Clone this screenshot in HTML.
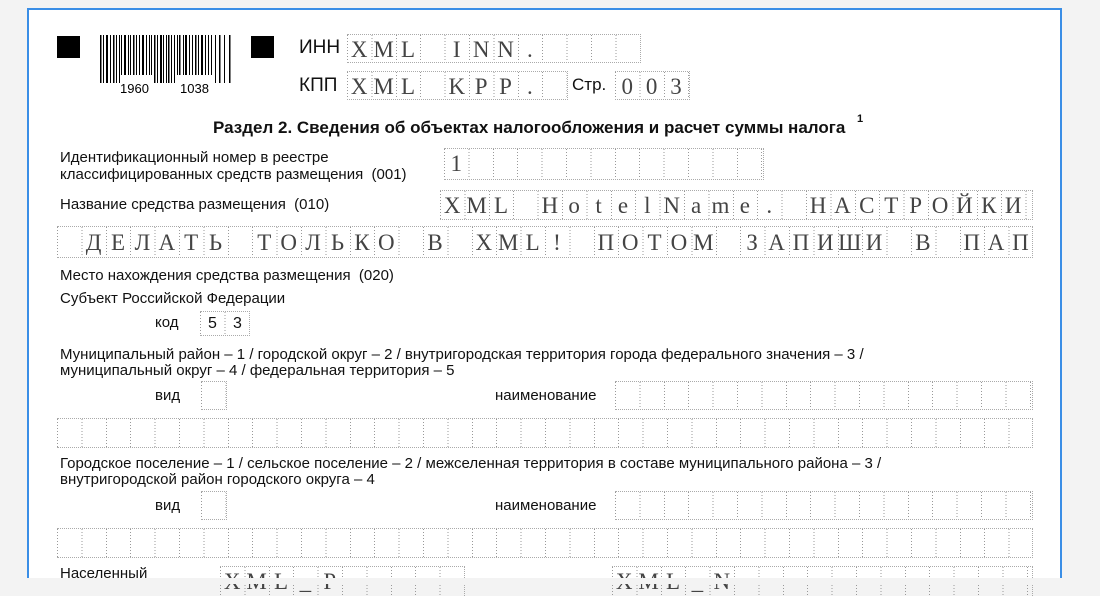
<!DOCTYPE html>
<html><head><meta charset="utf-8"><style>
html,body{margin:0;padding:0}
body{width:1100px;height:584px;background:#f3f3f3;position:relative;overflow:hidden;font-family:"Liberation Sans",Arial,sans-serif;color:#111}
#pg{position:absolute;left:27px;top:8px;width:1031px;height:570px;background:#fff;border:2px solid #3a8ee6;border-bottom:none}
.a{position:absolute;white-space:nowrap}
.t{font-size:15px}
.g{position:absolute;box-sizing:border-box;border-top:1px dotted #aaa;border-bottom:1px dotted #aaa;border-right:1px dotted #aaa;font-family:"Liberation Serif",serif;font-size:23px;white-space:nowrap;overflow:hidden;color:#444}
.g::before{content:"";position:absolute;left:0;top:0;right:0;bottom:0;background:repeating-linear-gradient(to right,#999 0 1px,transparent 1px 24.4px);-webkit-mask-image:repeating-linear-gradient(to bottom,#000 0 1px,transparent 1px 3px);mask-image:repeating-linear-gradient(to bottom,#000 0 1px,transparent 1px 3px)}
.g span{display:inline-block;width:24.4px;text-align:center;position:relative}
.sq{position:absolute;background:#000;width:23px;height:22px;top:36px}
</style></head><body>
<div id="pg"></div>
<div class="sq" style="left:57px"></div>
<div class="sq" style="left:251px"></div>
<svg class="a" style="left:100px;top:35px" width="132" height="60" viewBox="0 0 132 60">
<g fill="#000">
<rect x="0" y="0" width="1.5" height="48"/><rect x="3" y="0" width="1" height="48"/><rect x="6" y="0" width="2" height="48"/><rect x="10" y="0" width="1" height="48"/><rect x="13" y="0" width="1.5" height="48"/><rect x="16" y="0" width="1" height="48"/><rect x="19" y="0" width="1" height="48"/>
<rect x="21" y="0" width="1" height="40"/><rect x="24" y="0" width="2" height="40"/><rect x="28" y="0" width="1" height="40"/><rect x="30" y="0" width="1" height="40"/><rect x="33" y="0" width="1.5" height="40"/><rect x="36" y="0" width="1" height="40"/><rect x="39" y="0" width="1" height="40"/><rect x="42" y="0" width="2" height="40"/><rect x="46" y="0" width="1" height="40"/><rect x="49" y="0" width="1" height="40"/><rect x="51" y="0" width="1" height="40"/>
<rect x="54" y="0" width="1.5" height="48"/><rect x="57" y="0" width="1" height="48"/><rect x="60" y="0" width="2" height="48"/><rect x="63" y="0" width="1" height="48"/><rect x="66" y="0" width="1" height="48"/><rect x="68" y="0" width="1.5" height="48"/><rect x="71" y="0" width="1" height="48"/><rect x="74" y="0" width="1" height="48"/>
<rect x="77" y="0" width="1" height="40"/><rect x="79" y="0" width="1.5" height="40"/><rect x="83" y="0" width="1" height="40"/><rect x="85" y="0" width="2" height="40"/><rect x="89" y="0" width="1" height="40"/><rect x="92" y="0" width="1" height="40"/><rect x="95" y="0" width="1.5" height="40"/><rect x="98" y="0" width="1" height="40"/><rect x="101" y="0" width="2" height="40"/><rect x="105" y="0" width="1" height="40"/><rect x="108" y="0" width="1" height="40"/><rect x="111" y="0" width="1" height="40"/>
<rect x="115" y="0" width="1" height="48"/><rect x="119" y="0" width="1.5" height="48"/><rect x="124" y="0" width="1" height="48"/><rect x="129" y="0" width="1.5" height="48"/>
</g>
<text x="20" y="58" font-family="Liberation Sans" font-size="13">1960</text>
<text x="80" y="58" font-family="Liberation Sans" font-size="13">1038</text>
</svg>
<div class="a" style="left:299px;top:37px;font-size:19px">ИНН</div>
<div class="g" style="left:347px;top:34px;width:294px;height:29px;line-height:29px"><span>X</span><span>M</span><span>L</span><span> </span><span>I</span><span>N</span><span>N</span><span>.</span></div>
<div class="a" style="left:299px;top:75px;font-size:19px">КПП</div>
<div class="g" style="left:347px;top:71px;width:221px;height:29px;line-height:29px"><span>X</span><span>M</span><span>L</span><span> </span><span>K</span><span>P</span><span>P</span><span>.</span></div>
<div class="a" style="left:572px;top:75px;font-size:17px">Стр.</div>
<div class="g" style="left:615px;top:71px;width:75px;height:29px;line-height:29px"><span>0</span><span>0</span><span>3</span></div>
<div class="a" style="left:213px;top:118px;font-size:17px;font-weight:bold">Раздел 2. Сведения об объектах налогообложения и расчет суммы налога</div>
<div class="a" style="left:857px;top:113px;font-size:11px;font-weight:bold">1</div>
<div class="a t" style="left:60px;top:149px">Идентификационный номер в реестре</div>
<div class="a t" style="left:60px;top:166px">классифицированных средств размещения&nbsp; (001)</div>
<div class="g" style="left:444px;top:148px;width:320px;height:32px;line-height:30px"><span>1</span></div>
<div class="a t" style="left:60px;top:196px">Название средства размещения&nbsp; (010)</div>
<div class="g" style="left:440px;top:190px;width:593px;height:30px;line-height:30px"><span>X</span><span>M</span><span>L</span><span> </span><span>H</span><span>o</span><span>t</span><span>e</span><span>l</span><span>N</span><span>a</span><span>m</span><span>e</span><span>.</span><span> </span><span>Н</span><span>А</span><span>С</span><span>Т</span><span>Р</span><span>О</span><span>Й</span><span>К</span><span>И</span></div>
<div class="g" style="left:57px;top:226px;width:976px;height:32px;line-height:32px"><span> </span><span>Д</span><span>Е</span><span>Л</span><span>А</span><span>Т</span><span>Ь</span><span> </span><span>Т</span><span>О</span><span>Л</span><span>Ь</span><span>К</span><span>О</span><span> </span><span>В</span><span> </span><span>X</span><span>M</span><span>L</span><span>!</span><span> </span><span>П</span><span>О</span><span>Т</span><span>О</span><span>М</span><span> </span><span>З</span><span>А</span><span>П</span><span>И</span><span>Ш</span><span>И</span><span> </span><span>В</span><span> </span><span>П</span><span>А</span><span>П</span></div>
<div class="a t" style="left:60px;top:267px">Место нахождения средства размещения&nbsp; (020)</div>
<div class="a t" style="left:60px;top:290px">Субъект Российской Федерации</div>
<div class="a t" style="left:155px;top:314px">код</div>
<div class="g" style="left:200px;top:311px;width:50px;height:25px;line-height:24px;font-family:'Liberation Sans',sans-serif;font-size:16px;color:#111"><span style="width:25px">5</span><span style="width:25px">3</span></div>
<div class="a t" style="left:60px;top:346px">Муниципальный район – 1 / городской округ – 2 / внутригородская территория города федерального значения – 3 /</div>
<div class="a t" style="left:60px;top:362px">муниципальный округ – 4 / федеральная территория – 5</div>
<div class="a t" style="left:155px;top:387px">вид</div>
<div class="g" style="left:201px;top:381px;width:26px;height:29px"></div>
<div class="a t" style="left:495px;top:387px">наименование</div>
<div class="g" style="left:615px;top:381px;width:418px;height:29px"></div>
<div class="g" style="left:57px;top:418px;width:976px;height:30px"></div>
<div class="a t" style="left:60px;top:455px">Городское поселение – 1 / сельское поселение – 2 / межселенная территория в составе муниципального района – 3 /</div>
<div class="a t" style="left:60px;top:471px">внутригородской район городского округа – 4</div>
<div class="a t" style="left:155px;top:497px">вид</div>
<div class="g" style="left:201px;top:491px;width:26px;height:29px"></div>
<div class="a t" style="left:495px;top:497px">наименование</div>
<div class="g" style="left:615px;top:491px;width:418px;height:29px"></div>
<div class="g" style="left:57px;top:528px;width:976px;height:30px"></div>
<div class="a t" style="left:60px;top:565px">Населенный</div>
<div class="g" style="left:220px;top:566px;width:245px;height:30px;line-height:30px;border-bottom:none"><span>X</span><span>M</span><span>L</span><span>_</span><span>P</span></div>
<div class="g" style="left:612px;top:566px;width:421px;height:30px;line-height:30px;border-bottom:none"><span>X</span><span>M</span><span>L</span><span>_</span><span>N</span></div>
<div style="position:absolute;left:0;top:578px;width:1100px;height:6px;background:#f3f3f3"></div>
</body></html>
